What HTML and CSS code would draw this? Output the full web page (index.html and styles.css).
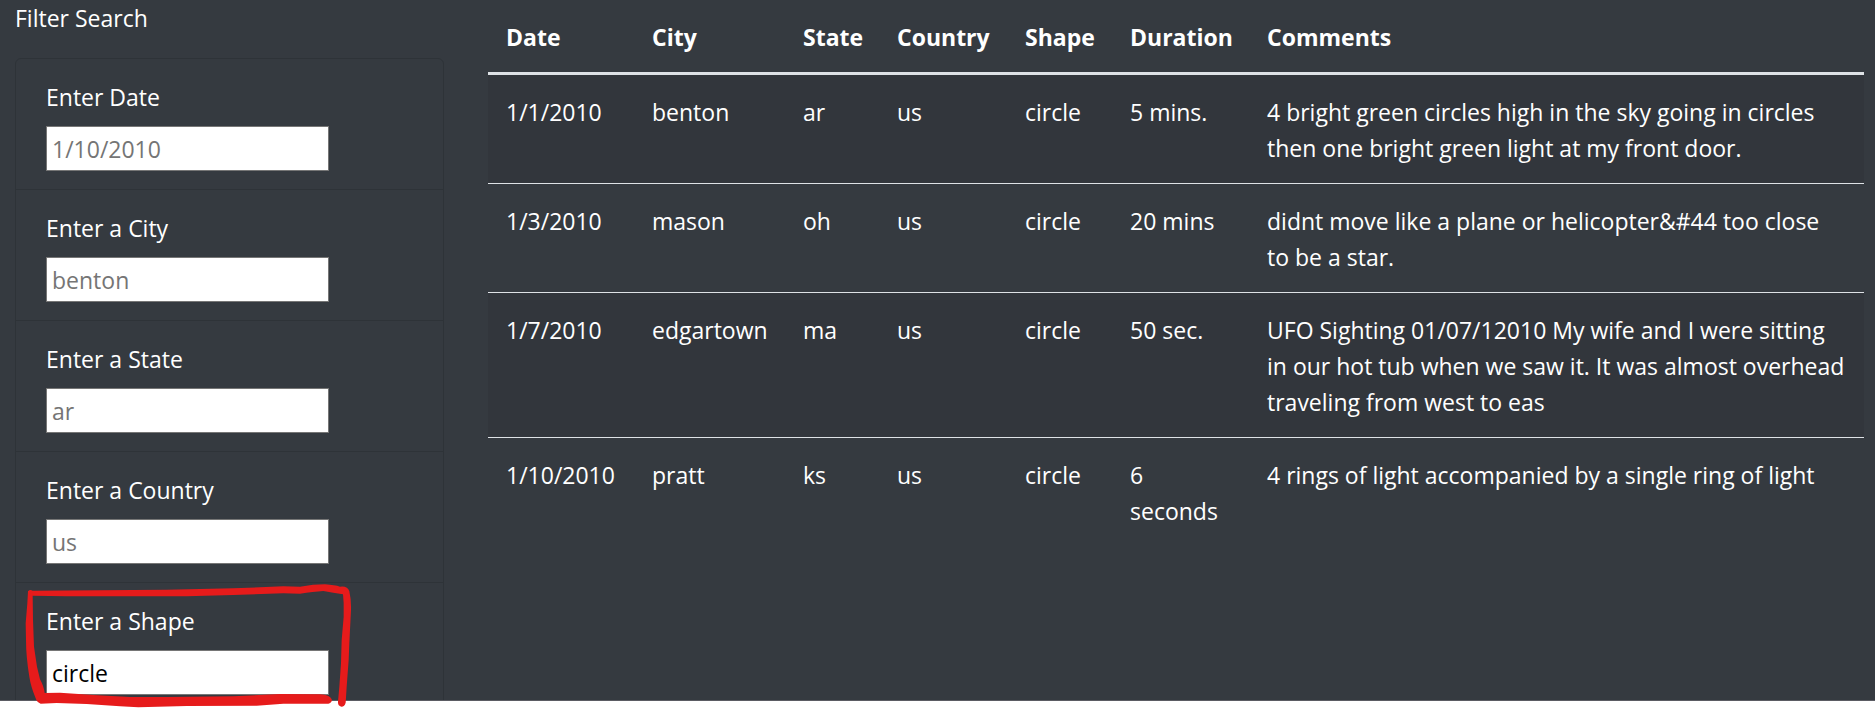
FILE: index.html
```html
<!DOCTYPE html>
<html lang="en">
<head>
<meta charset="utf-8">
<title>UFO Sightings</title>
<link rel="stylesheet" href="styles.css">
</head>
<body>
<div class="page">
  <main class="layout">
    <form class="filters">
      <p class="filters-title">Filter Search</p>
      <ul class="filter-list">
        <li class="filter"><label for="date">Enter Date</label><input class="field" id="date" type="text" placeholder="1/10/2010"></li>
        <li class="filter"><label for="city">Enter a City</label><input class="field" id="city" type="text" placeholder="benton"></li>
        <li class="filter"><label for="state">Enter a State</label><input class="field" id="state" type="text" placeholder="ar"></li>
        <li class="filter"><label for="country">Enter a Country</label><input class="field" id="country" type="text" placeholder="us"></li>
        <li class="filter"><label for="shape">Enter a Shape</label><input class="field" id="shape" type="text" value="circle"></li>
      </ul>
    </form>
    <div class="results">
      <table class="sightings">
        <colgroup>
          <col class="col-date"><col class="col-city"><col class="col-state"><col class="col-country"><col class="col-shape"><col class="col-duration"><col>
        </colgroup>
        <thead>
          <tr><th>Date</th><th>City</th><th>State</th><th>Country</th><th>Shape</th><th>Duration</th><th>Comments</th></tr>
        </thead>
        <tbody>
          <tr><td>1/1/2010</td><td>benton</td><td>ar</td><td>us</td><td>circle</td><td>5 mins.</td><td>4 bright green circles high in the sky going in circles then one bright green light at my front door.</td></tr>
          <tr><td>1/3/2010</td><td>mason</td><td>oh</td><td>us</td><td>circle</td><td>20 mins</td><td>didnt move like a plane or helicopter&amp;#44 too close to be a star.</td></tr>
          <tr><td>1/7/2010</td><td>edgartown</td><td>ma</td><td>us</td><td>circle</td><td>50 sec.</td><td>UFO Sighting 01/07/12010 My wife and I were sitting in our hot tub when we saw it. It was almost overhead traveling from west to eas</td></tr>
          <tr><td>1/10/2010</td><td>pratt</td><td>ks</td><td>us</td><td>circle</td><td>6 seconds</td><td>4 rings of light accompanied by a single ring of light</td></tr>
        </tbody>
      </table>
    </div>
  </main>
  <svg class="marker" viewBox="0 0 1380 450" aria-hidden="true">
    <path d="M84 94Q90 87 98 92L500 89L700 85L850 79L900 80Q940 73 975 73Q1005 75 1020 80Q1043 77 1048 94Q1054 120 1053 150L1048 250L1046 300L1040 380L1037 428Q1034 440 1024 440Q1013 438 1014 425L1018 380L1023 310L1025 240L1031 170L1031 130L1029 103Q1000 98 970 93Q940 95 900 101L850 100L700 105L560 109L200 109L98 107L99 180L102 260L111 320L120 358Q132 380 134 399L180 398L280 405L390 411L500 411L700 409L840 402L960 403Q992 405 996 420Q994 430 985 431L850 431L770 437L560 438L415 442L360 439L260 432L170 429L122 431Q111 428 107 415Q92 378 88 350Q78 290 78 240L77 190L82 130Z"/>
  </svg>
</div>
</body>
</html>
```
FILE: styles.css
```css
* {
  box-sizing: border-box;
}

body {
  margin: 0;
  background: #fff;
  color: #fff;
  font-family: "Segoe UI", "Open Sans", "Noto Sans", sans-serif;
  font-size: 23px;
  line-height: 36px;
}

.page {
  position: relative;
  height: 100vh;
  padding-bottom: 9px;
  overflow: hidden;
}

.layout {
  display: grid;
  grid-template-columns: 25% minmax(0, 1fr);
  column-gap: 19px;
  height: 100%;
  padding-right: 11px;
  overflow: hidden;
  background: #353a40;
  border-bottom: 1px solid #5b5c63;
}

.filters {
  padding: 0 22px 0 15px;
}

.filters-title {
  margin: 0 0 22px;
}

.filter-list {
  margin: 0;
  padding: 0;
  list-style: none;
  border: 1px solid #2e3338;
  border-radius: 6px;
}

.filter {
  display: flex;
  flex-direction: column;
  align-items: flex-start;
  gap: 11px;
  padding: 20px 30px 18px;
  border-bottom: 1px solid #2e3338;
}

.field {
  width: 283px;
  max-width: 100%;
  height: 45px;
  padding: 2px 5px;
  border: 1px solid #767676;
  border-radius: 0;
  background: #fff;
  color: #000;
  font: inherit;
}

.field::placeholder {
  color: #757575;
  opacity: 1;
}

.results {
  padding-left: 3px;
}

.sightings {
  width: 100%;
  table-layout: fixed;
  border-collapse: separate;
  border-spacing: 0;
}

.col-date { width: 146px; }
.col-city { width: 151px; }
.col-state { width: 94px; }
.col-country { width: 128px; }
.col-shape { width: 105px; }
.col-duration { width: 137px; }

.sightings th,
.sightings td {
  padding: 19px 18px 17px;
  text-align: left;
  vertical-align: top;
}

.sightings th {
  border-bottom: 3px solid #dee2e6;
  font-weight: 700;
}

.sightings tbody tr + tr td {
  border-top: 1px solid #dee2e6;
}

.sightings tbody tr:nth-child(odd) {
  background: #32363c;
}

.marker {
  position: absolute;
  left: 0;
  top: 560px;
  width: 460px;
  height: 150px;
  fill: #e61b1b;
  pointer-events: none;
}
```
